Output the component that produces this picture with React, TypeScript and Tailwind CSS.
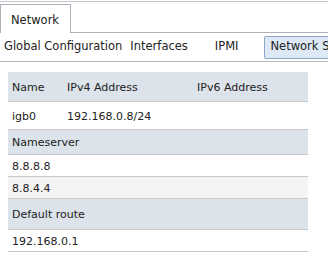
import React from "react";

const font = { fontFamily: '"DejaVu Sans", Verdana, sans-serif' };

function Row({ h, bg, cells }: { h: string; bg: string; cells: string[] }) {
  return (
    <div className={`flex items-center pt-[3px] border-b border-[#c8c8c8] whitespace-nowrap ${h} ${bg}`}>
      <div className="w-[59px] pl-[4px]">{cells[0]}</div>
      <div className="w-[130px]">{cells[1] ?? ""}</div>
      <div className="flex-1">{cells[2] ?? ""}</div>
    </div>
  );
}

export default function App() {
  return (
    <div className="w-[328px] h-[267px] bg-white text-[11px] text-[#222] overflow-hidden" style={font}>
      <div className="h-[1px] bg-white" />
      <div className="h-[1px] bg-[#c4c4cc]" />
      <div className="flex h-[31px] pt-[2px]">
        <div className="w-[71px] border border-b-0 border-[#b0b0b8] bg-white flex items-center pt-[3px] pl-[10px] text-[11.5px]">
          Network
        </div>
        <div className="flex-1 border-b border-[#b0b0b8]" />
      </div>
      <div className="flex items-center h-[29px] border-b border-[#b8b8c0] whitespace-nowrap text-[11.5px]">
        <span className="pl-[4px]">Global Configuration</span>
        <span className="ml-[8px]">Interfaces</span>
        <span className="ml-[27px]">IPMI</span>
        <span className="ml-[26px] h-[23px] flex items-center px-[5px] bg-[#dde9f7] border border-[#8ea6c4] rounded-[2px]">
          Network Summary
        </span>
      </div>
      <div className="ml-[8px] w-[300px] mt-[10px]">
        <Row h="h-[30px]" bg="bg-[#dce3ea]" cells={["Name", "IPv4 Address", "IPv6 Address"]} />
        <Row h="h-[28px]" bg="bg-white" cells={["igb0", "192.168.0.8/24"]} />
        <Row h="h-[25px]" bg="bg-[#dce3ea]" cells={["Nameserver"]} />
        <Row h="h-[22px]" bg="bg-white" cells={["8.8.8.8"]} />
        <Row h="h-[22px]" bg="bg-[#f4f4f4]" cells={["8.8.4.4"]} />
        <Row h="h-[31px]" bg="bg-[#dce3ea]" cells={["Default route"]} />
        <Row h="h-[22px]" bg="bg-white" cells={["192.168.0.1"]} />
      </div>
    </div>
  );
}
